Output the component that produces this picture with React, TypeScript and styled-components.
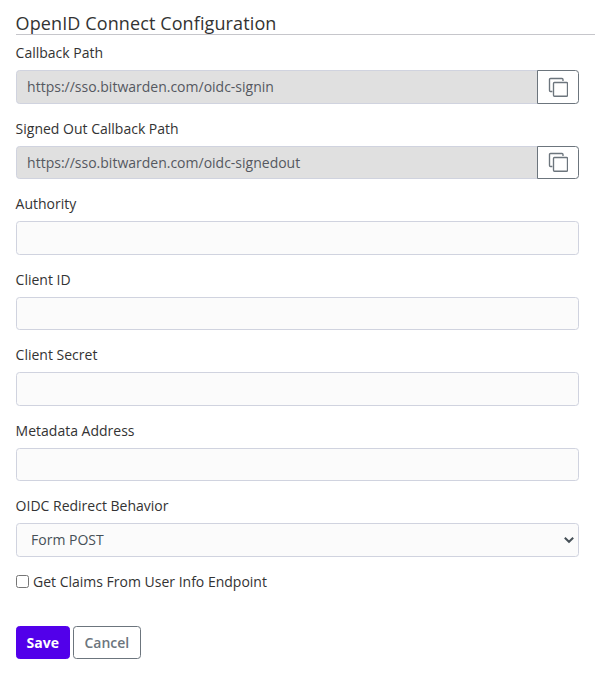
import React from 'react';
import styled, { createGlobalStyle } from 'styled-components';

const GlobalStyle = createGlobalStyle`
  *, *::before, *::after { box-sizing: border-box; }
  html { font-size: 14px; }
  body {
    margin: 0;
    background: #fff;
    color: #333;
    font-family: 'Open Sans', 'Liberation Sans', sans-serif;
    font-size: 1rem;
    line-height: 1.5;
    overflow: hidden;
  }
  input, select, button { font: inherit; margin: 0; }
`;

const Page = styled.form`
  padding: 12px 0 0 15.6px;
`;

const Heading = styled.h2`
  margin: 0 0 7px;
  height: 23px;
  border-bottom: 1px solid #c6c6cb;
  font-size: 18px;
  font-weight: 400;
  letter-spacing: 0.11px;
  line-height: 22px;
`;

const Fields = styled.div`
  width: 563px;
`;

const Group = styled.div`
  margin-bottom: 1rem;
`;

const Label = styled.label`
  display: block;
  margin-bottom: 0.5rem;
`;

const InputRow = styled.div`
  display: flex;
`;

const Input = styled.input<{ $joined?: boolean }>`
  flex: 1;
  display: block;
  width: 100%;
  min-width: 0;
  height: 33.5px;
  padding: 5.25px 10.5px;
  border: 1px solid #d0d3df;
  border-radius: ${p => (p.$joined ? '3.5px 0 0 3.5px' : '3.5px')};
  background: ${p => (p.readOnly ? '#e0e0e0' : '#fbfbfb')};
  color: #555860;
  outline: none;
`;

const SelectWrap = styled.div`
  position: relative;

  svg {
    position: absolute;
    right: 4px;
    top: 13px;
    pointer-events: none;
  }
`;

const Select = styled.select`
  appearance: none;
  display: block;
  width: 100%;
  height: 33.5px;
  padding: 5.25px 20px 5.25px 14.5px;
  border: 1px solid #d0d3df;
  border-radius: 3.5px;
  background: #fbfbfb;
  color: #465057;
`;

const Button = styled.button<{ $primary?: boolean }>`
  height: 33px;
  padding: 5px ${p => (p.$primary ? '10px' : '10.4px')};
  border: 1px solid ${p => (p.$primary ? '#5200ea' : '#6c757d')};
  border-radius: 3.5px;
  background: ${p => (p.$primary ? '#5200ea' : '#fff')};
  color: ${p => (p.$primary ? '#fff' : '#6c757d')};
  font-weight: ${p => (p.$primary ? 700 : 600)};
`;

const CopyButton = styled(Button)`
  display: flex;
  align-items: center;
  justify-content: center;
  width: 42px;
  height: 33.5px;
  margin-left: -1px;
  padding: 0;
  border-radius: 0 3.5px 3.5px 0;
`;

const CheckRow = styled.label`
  display: flex;
  align-items: center;
  gap: 4.4px;
  height: 21px;
`;

const Checkbox = styled.input`
  width: 13px;
  height: 13px;
`;

const Actions = styled.div`
  display: flex;
  gap: 3px;
  margin-top: 34.5px;
`;

const CopyIcon = () => (
  <svg width="20" height="20" viewBox="0 0 20 20" fill="none" stroke="#6c757d" strokeWidth="1.35">
    <path d="M4.4 14.5H2.5a1 1 0 0 1-1-1v-11a1 1 0 0 1 1-1h11.5a1 1 0 0 1 1 1V4" />
    <rect x="5.5" y="5.5" width="14" height="13.7" rx="0.9" />
  </svg>
);

const Chevron = () => (
  <svg width="12" height="8" viewBox="0 0 12 8" fill="none" stroke="#465057" strokeWidth="2">
    <path d="M1.8 1.8 6 5.8l4.2-4" />
  </svg>
);

const callbacks = [
  { id: 'callback', label: 'Callback Path', value: 'https://sso.bitwarden.com/oidc-signin' },
  { id: 'signedout', label: 'Signed Out Callback Path', value: 'https://sso.bitwarden.com/oidc-signedout' },
];

const settings = ['Authority', 'Client ID', 'Client Secret', 'Metadata Address'];

export default function App() {
  return (
    <>
      <GlobalStyle />
      <Page onSubmit={e => e.preventDefault()}>
        <Heading>OpenID Connect Configuration</Heading>
        <Fields>
          {callbacks.map(c => (
            <Group key={c.id}>
              <Label htmlFor={c.id}>{c.label}</Label>
              <InputRow>
                <Input id={c.id} readOnly $joined value={c.value} />
                <CopyButton type="button" aria-label="Copy"><CopyIcon /></CopyButton>
              </InputRow>
            </Group>
          ))}
          {settings.map(name => (
            <Group key={name}>
              <Label htmlFor={name}>{name}</Label>
              <Input id={name} />
            </Group>
          ))}
          <Group>
            <Label htmlFor="redirect">OIDC Redirect Behavior</Label>
            <SelectWrap>
              <Select id="redirect"><option>Form POST</option></Select>
              <Chevron />
            </SelectWrap>
          </Group>
          <CheckRow><Checkbox type="checkbox" />Get Claims From User Info Endpoint</CheckRow>
          <Actions>
            <Button $primary type="submit">Save</Button>
            <Button type="button">Cancel</Button>
          </Actions>
        </Fields>
      </Page>
    </>
  );
}
